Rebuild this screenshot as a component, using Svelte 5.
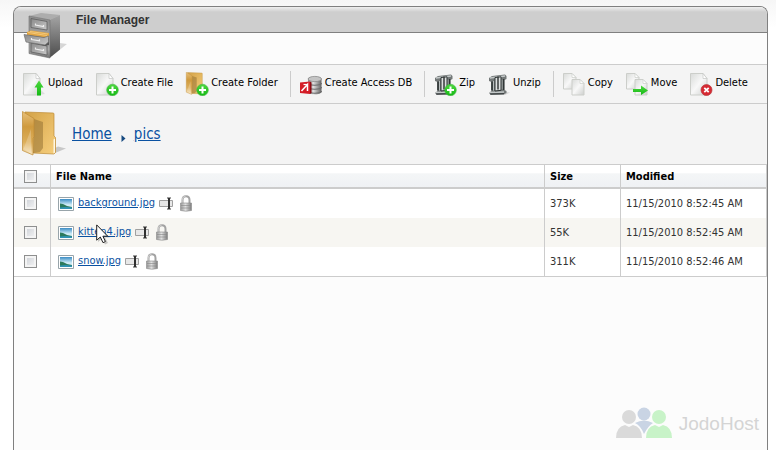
<script lang="ts">
	type Tool = { icon: string; label: string };

	const toolGroups: Tool[][] = [
		[
			{ icon: 'upload', label: 'Upload' },
			{ icon: 'create-file', label: 'Create File' },
			{ icon: 'create-folder', label: 'Create Folder' },
		],
		[{ icon: 'access', label: 'Create Access DB' }],
		[
			{ icon: 'zip', label: 'Zip' },
			{ icon: 'unzip', label: 'Unzip' },
		],
		[
			{ icon: 'copy', label: 'Copy' },
			{ icon: 'move', label: 'Move' },
			{ icon: 'delete', label: 'Delete' },
		],
	];

	let files = $state([
		{ name: 'background.jpg', size: '373K', modified: '11/15/2010 8:52:45 AM', checked: false },
		{ name: 'kitten4.jpg', size: '55K', modified: '11/15/2010 8:52:45 AM', checked: false },
		{ name: 'snow.jpg', size: '311K', modified: '11/15/2010 8:52:46 AM', checked: false },
	]);

	let allChecked = $derived(files.every((f) => f.checked));

	function toggleAll() {
		const next = !allChecked;
		for (const file of files) file.checked = next;
	}
</script>

<!-- shared gradients for the icons -->
<svg class="defs" width="0" height="0" aria-hidden="true">
	<defs>
		<linearGradient id="paper" x1="0" y1="0" x2="1" y2="1">
			<stop offset="0" stop-color="#d9dbd9" /><stop offset="0.5" stop-color="#f8f8f8" /><stop offset="1" stop-color="#cdcfcd" />
		</linearGradient>
		<linearGradient id="gold" x1="0" y1="0" x2="1" y2="1">
			<stop offset="0" stop-color="#d3a247" /><stop offset="1" stop-color="#f6ce7c" />
		</linearGradient>
		<linearGradient id="goldFront" x1="0" y1="0" x2="0" y2="1">
			<stop offset="0" stop-color="#e8c07a" /><stop offset="0.35" stop-color="#cf9a3e" /><stop offset="0.7" stop-color="#dcae5a" /><stop offset="1" stop-color="#f7e2b8" />
		</linearGradient>
		<linearGradient id="green" x1="0" y1="0" x2="0" y2="1">
			<stop offset="0" stop-color="#4ed83f" /><stop offset="1" stop-color="#14b914" />
		</linearGradient>
		<linearGradient id="steel" x1="0" y1="0" x2="1" y2="0">
			<stop offset="0" stop-color="#8a8a8a" /><stop offset="0.4" stop-color="#dedede" /><stop offset="1" stop-color="#636363" />
		</linearGradient>
		<linearGradient id="lock" x1="0" y1="0" x2="1" y2="0">
			<stop offset="0" stop-color="#9a9a9a" /><stop offset="0.45" stop-color="#e0e0e0" /><stop offset="1" stop-color="#7d7d7d" />
		</linearGradient>
		<linearGradient id="side" x1="0" y1="0" x2="0" y2="1">
			<stop offset="0" stop-color="#a5a5a5" /><stop offset="1" stop-color="#4c4c4c" />
		</linearGradient>
		<linearGradient id="face" x1="0" y1="0" x2="0" y2="1">
			<stop offset="0" stop-color="#8e8e8e" /><stop offset="0.8" stop-color="#a8a8a8" /><stop offset="1" stop-color="#707070" />
		</linearGradient>
		<linearGradient id="drawer" x1="0" y1="0" x2="1" y2="1">
			<stop offset="0" stop-color="#8a8a8a" /><stop offset="1" stop-color="#c9c9c9" />
		</linearGradient>
		<linearGradient id="sky" x1="0" y1="0" x2="0" y2="1">
			<stop offset="0" stop-color="#3b8cc4" /><stop offset="0.55" stop-color="#c8e8f5" /><stop offset="1" stop-color="#f4fafa" />
		</linearGradient>
	</defs>
</svg>

{#snippet plusBadge()}
	<circle cx="17.500" cy="18" r="5.800" fill="url(#green)" stroke="#3cb53c" stroke-width="0.6" />
	<path d="M17.500 14.500v7M14 18h7" stroke="#fff" stroke-width="2" />
{/snippet}

{#snippet sheet()}
	<path d="M16 23l7-1-4-4z" fill="#ddd" />
	<path d="M1.500 1.500h12.500l4 5v16.500H1.500z" fill="url(#paper)" stroke="#ccceca" />
	<path d="M14 1.500v5h4z" fill="#fff" stroke="#c4c6c4" stroke-width="0.7" />
{/snippet}

{#snippet folder()}
	<path d="M33 42l11-4.500-8-2-4 2z" fill="#000" opacity="0.18" />
	<path d="M3 1L31 2q1 0 1 1v22l1.500 1.500v15L32 43 11 42z" fill="url(#gold)" stroke="#bd8b35" stroke-width="0.700" />
	<path d="M12 8l9 3v26l-3 4-7 1z" fill="#8d6c2f" opacity="0.5" />
	<path d="M31.500 28.500l1.500-1v14l-1.500 1z" fill="#fff8e4" />
	<path d="M0.500 0.500l11.500 7v18l-1 2v16.500L0.500 39.500z" fill="url(#goldFront)" stroke="#bd8b35" stroke-width="0.700" />
	<path d="M1.500 38l7.500-20v24.500z" fill="#fff" opacity="0.22" />
{/snippet}

{#snippet clamp()}
	<path d="M16 20l7 .5-5 2.500H6z" fill="#000" opacity="0.12" />
	<path d="M2 6l3-2 13-1.500 1.500 1.500v3l-2 1v10l2 1v2l-3 1.500-12.500.5-2-2 2.500-2V10L2 9z" fill="#737878" />
	<path d="M3 6l15-2M3 20.500l14-.5" stroke="#c3c8c8" stroke-width="1.300" />
	<path d="M5 9.500v9M16.500 7v11" stroke="#303636" stroke-width="1.700" />
	<path d="M6.500 9v9.500M15 7.500v10" stroke="#b8bebe" />
	<path d="M8 5.500l6-.7v13.500l-6 .7z" fill="#dde0e0" stroke="#2e3434" />
	<path d="M11 4.500v13" stroke="#353a3a" stroke-width="1.500" />
	<path d="M3 22l14-.3" stroke="#34393a" />
{/snippet}

{#snippet toolIcon(kind: string)}
	<svg width="24" height="24" viewBox="0 0 24 24" aria-hidden="true">
		{#if kind === 'upload'}
			{@render sheet()}
			<path d="M17 8.500l4.500 7H19v8h-4v-8h-2.500z" fill="url(#green)" />
		{:else if kind === 'create-file'}
			{@render sheet()}
			{@render plusBadge()}
		{:else if kind === 'create-folder'}
			<g transform="translate(1 0) scale(0.51)">{@render folder()}</g>
			{@render plusBadge()}
		{:else if kind === 'access'}
			<path d="M9 7c0-3.500 13.500-3.500 13.500 0v12.500c0 4-13.500 4-13.500 0z" fill="url(#steel)" />
			<ellipse cx="15.800" cy="7" rx="6.700" ry="2.600" fill="#c4c4c4" stroke="#858585" stroke-width="0.7" />
			<path d="M9 11c0 3 13.500 3 13.500 0M9 15c0 3 13.500 3 13.500 0M9 19c0 3 13.500 3 13.500 0" fill="none" stroke="#6b6b6b" stroke-width="1.100" />
			<path d="M1 10.500l10-1v12.500l-10-1z" fill="#d41d27" />
			<path d="M2.500 19l6-6.500v6.500" fill="none" stroke="#fff" stroke-width="1.500" />
			<path d="M4.500 12.500h4" fill="none" stroke="#fff" stroke-width="1.200" />
			<path d="M11 9.500l1.500 1v10.500l-1.500 1z" fill="#8c0b13" />
		{:else if kind === 'zip'}
			{@render clamp()}
			{@render plusBadge()}
		{:else if kind === 'unzip'}
			{@render clamp()}
		{:else if kind === 'copy' || kind === 'move'}
			<path d="M1.500 1.500h8.500l4 4v11.500H1.500z" fill="url(#paper)" stroke="#ccceca" />
			<path d="M10 1.500v4h4z" fill="#fff" stroke="#ccceca" stroke-width="0.700" />
			<path d="M10 7.500h8l4 4v11.500H10z" fill="url(#paper)" stroke="#ccceca" />
			<path d="M18 7.500v4h4z" fill="#fff" stroke="#ccceca" stroke-width="0.700" />
			{#if kind === 'move'}
				<path d="M8 17h8v-3.500l7 5-7 4.500v-3H8z" fill="url(#green)" />
			{/if}
		{:else if kind === 'delete'}
			{@render sheet()}
			<circle cx="17.500" cy="18" r="5.500" fill="#d62a33" stroke="#b9363b" stroke-width="0.7" />
			<path d="M15.300 15.800l4.400 4.400M19.700 15.800l-4.400 4.400" stroke="#fff" stroke-width="1.800" />
		{/if}
	</svg>
{/snippet}

<main class="page">
	<section class="panel">
		<header class="title-bar">
			<svg class="cabinet" width="48" height="48" viewBox="0 0 48 48" aria-hidden="true">
				<path d="M30 44l15-12-7-1-9 6z" fill="#000" opacity="0.15" />
				<path d="M7 4l12-3 19 2-10 5z" fill="#adadad" />
				<path d="M27.500 8L38 3v34.500L27.500 46z" fill="url(#side)" />
				<path d="M7 4l21 4v38L7 41.500z" fill="url(#face)" stroke="#6f6f6f" stroke-width="0.600" />
				<path d="M9 6.500l16 3v8.500L9 15.500z" fill="url(#drawer)" stroke="#5e5e5e" stroke-width="0.800" />
				<path d="M9 31l16 3v9L9 40z" fill="url(#drawer)" stroke="#5e5e5e" stroke-width="0.800" />
				<path d="M8 19l19 3v11l-4 1-15-4z" fill="#555" />
				<path d="M5 20l4-1.500 18 2.500v5L5 23z" fill="#e2a542" />
				<path d="M6 20.500l19 3M8 19.500l18 2.500" stroke="#f8d690" stroke-width="0.700" />
				<path d="M2 22.500l20 3 4.500-1.500v6L23 33l-19-3z" fill="url(#drawer)" stroke="#707070" stroke-width="0.700" />
				<path d="M13.500 11.500v1.500l8 1.500V13M9.500 26v1.500l8 1.300v-1.500M13.500 35.500v1.500l8 1.500V37" fill="none" stroke="#eee" stroke-width="1.200" />
			</svg>
			<h1>File Manager</h1>
		</header>
		<div class="spacer"></div>

		<div class="toolbar" role="toolbar" aria-label="File actions">
			{#each toolGroups as group}
				<div class="tool-group">
					{#each group as tool}
						<button type="button" class="tool">
							{@render toolIcon(tool.icon)}
							<span>{tool.label}</span>
						</button>
					{/each}
				</div>
			{/each}
		</div>

		<nav class="breadcrumb" aria-label="Current folder">
			<svg width="46" height="46" viewBox="0 0 46 46" aria-hidden="true">
				{@render folder()}
			</svg>
			<a href="#home">Home</a>
			<svg class="arrow" width="5" height="7" viewBox="0 0 5 7" aria-hidden="true">
				<path d="M0.500 0L4.500 3.500 0.500 7z" fill="#174a80" />
			</svg>
			<a href="#pics">pics</a>
		</nav>

		<table class="files">
			<thead>
				<tr>
					<th class="col-check">
						<input type="checkbox" aria-label="Select all files" checked={allChecked} onchange={toggleAll} />
					</th>
					<th>File Name</th>
					<th class="col-size">Size</th>
					<th class="col-modified">Modified</th>
				</tr>
			</thead>
			<tbody>
				{#each files as file, i}
					<tr>
						<td class="col-check">
							<input type="checkbox" aria-label="Select {file.name}" bind:checked={file.checked} />
						</td>
						<td>
							<div class="file">
								<svg width="16" height="14" viewBox="0 0 16 14" aria-hidden="true">
									<path d="M0.500 0.500h15v13h-15z" fill="#fff" stroke="#98a4aa" />
									<path d="M2 2h12v10H2z" fill="url(#sky)" />
									<path d="M2 6.500l3 .5 4 2 5 1v1H2z" fill="#2c7a5c" />
									<path d="M2 10.500l6-.5 6 .5V12H2z" fill="#2f93b4" />
								</svg>
								<a href="#{file.name}">{file.name}</a>
								<button type="button" class="action rename" aria-label="Rename {file.name}">
									<svg width="15" height="13" viewBox="0 0 15 13" aria-hidden="true">
										<path d="M0.500 3.500h13v6h-13z" fill="#e8e8e8" stroke="#a0a0a0" />
										<path d="M8 1h4M8 12h4" stroke="#404040" stroke-width="1.200" />
										<path d="M10 1v11" stroke="#303030" stroke-width="2" />
									</svg>
								</button>
								<button type="button" class="action" aria-label="Permissions of {file.name}">
									<svg width="12" height="17" viewBox="0 0 12 17" aria-hidden="true">
										<path d="M2.500 9V5q0-3.700 3.500-3.700T9.500 5v4" fill="none" stroke="#a2a2a2" stroke-width="2" />
										<path d="M2.200 8V5q0-3.500 3.300-3.700" fill="none" stroke="#dcdcdc" stroke-width="0.8" />
										<path d="M0.500 8h11v7.500q-5.500 1.500-11 0z" fill="url(#lock)" stroke="#8a8a8a" stroke-width="0.600" />
										<path d="M1 10.500h10M1 13h10" stroke="#858585" stroke-width="0.600" />
									</svg>
								</button>
								{#if i === 1}
									<svg class="pointer" width="14" height="21" viewBox="0 0 14 21" aria-hidden="true">
										<path d="M2 2v16l4-3.300 3 5.800 3-1.500-3-5.500h5z" fill="#000" opacity="0.2" />
										<path d="M0.700 0.900v15.300l3.600-3.200 2.700 5.700 2.400-1.200-2.500-5.300h4.800z" fill="#fff" stroke="#222" />
									</svg>
								{/if}
							</div>
						</td>
						<td>{file.size}</td>
						<td>{file.modified}</td>
					</tr>
				{/each}
			</tbody>
		</table>

		<footer class="brand">
			<svg width="58" height="34" viewBox="0 0 58 34" aria-hidden="true">
				<circle cx="29" cy="8" r="6.500" fill="#c9d4e4" />
				<path d="M20 17q9-5 18 0-5 3-9 11-3-8-9-11z" fill="#c9d4e4" />
				<circle cx="14" cy="11" r="7" fill="#dadada" />
				<path d="M1 32q0-11 9-13l4 2 4-2q9 2 9 13z" fill="#dadada" />
				<circle cx="44" cy="11" r="7" fill="#c8f3c8" />
				<path d="M31 32q0-11 9-13l4 2 4-2q9 2 9 13z" fill="#c8f3c8" />
			</svg>
			<span>JodoHost</span>
		</footer>
	</section>
</main>

<style>
	:global(body) {
		margin: 0;
		background: #fff;
	}

	.defs {
		position: absolute;
	}

	svg {
		display: block;
		flex-shrink: 0;
	}

	.page {
		box-sizing: border-box;
		display: flex;
		min-height: 100vh;
		padding: 6px 8px 0 13px;
		background: linear-gradient(#f6f6f6, #fff 28px);
		color: #333;
		font-family: 'DejaVu Sans Condensed', Tahoma, sans-serif;
		font-size: 11px;
	}

	.panel {
		flex: 1;
		display: flex;
		flex-direction: column;
		border: 1px solid #808080;
		border-bottom: 0;
		border-radius: 8px 8px 0 0;
		background: #fcfcfc;
	}

	.title-bar {
		position: relative;
		height: 25px;
		padding-left: 62px;
		border-bottom: 1px solid #808080;
		border-radius: 7px 7px 0 0;
		background: linear-gradient(#efefef, #cecece 5px);
	}

	.title-bar h1 {
		margin: 0;
		font: bold 12px/26px 'Liberation Sans', Arial, sans-serif;
		color: #333;
	}

	.cabinet {
		position: absolute;
		top: 5px;
		left: 8px;
	}

	.spacer {
		height: 31px;
	}

	.toolbar {
		display: flex;
		align-items: center;
		height: 38px;
		padding-left: 8px;
		border-top: 1px solid #ccc;
		border-bottom: 1px solid #ccc;
		background: #f4f4f4;
	}

	.tool-group {
		display: flex;
		align-items: center;
		gap: 12px;
		height: 26px;
	}

	.tool-group + .tool-group {
		margin-left: 12px;
		padding-left: 8px;
		border-left: 1px solid #ccc;
	}

	.tool {
		display: flex;
		align-items: center;
		gap: 2px;
		padding: 0;
		border: 0;
		background: none;
		color: #000;
		font: inherit;
		line-height: 14px;
		white-space: nowrap;
		cursor: pointer;
	}

	.tool span {
		padding-bottom: 2px;
	}

	.breadcrumb {
		display: flex;
		align-items: center;
		height: 60px;
		padding-left: 8px;
		background: #f4f4f4;
		font-size: 15px;
	}

	.breadcrumb a {
		margin-left: 4px;
	}

	.arrow {
		margin: 8px 4px 0 9px;
	}

	a {
		color: #0a51a1;
		text-decoration: underline;
	}

	.files {
		width: 100%;
		border-collapse: separate;
		border-spacing: 0;
		table-layout: fixed;
		border: solid #ccc;
		border-width: 1px 1px 1px 0;
		background: #fff;
	}

	th,
	td {
		box-sizing: border-box;
		padding: 0 5px;
		border-left: 1px solid #ccc;
		text-align: left;
		white-space: nowrap;
	}

	th {
		height: 24px;
		border-bottom: 2px solid #ccc;
		background: linear-gradient(#fff 35%, #f4f6f7 40%, #eff1f4);
		color: #000;
	}

	td {
		height: 29px;
	}

	tbody tr:nth-child(even) {
		background: #f7f6f2;
	}

	.col-check {
		width: 36px;
		padding-left: 10px;
		border-left: 0;
	}

	.col-size {
		width: 76px;
	}

	.col-modified {
		width: 146px;
	}

	input[type='checkbox'] {
		display: block;
		appearance: none;
		width: 13px;
		height: 13px;
		margin: 0;
		border: 1px solid #8e8f8f;
		background: linear-gradient(135deg, #cbcfd5, #f6f6f6);
		box-shadow: inset 0 0 0 2px #f4f4f4;
	}

	input[type='checkbox']:checked {
		background: #2c628b;
	}

	.file {
		position: relative;
		display: flex;
		align-items: center;
		gap: 4px;
		padding-left: 2px;
	}

	.file a {
		padding-bottom: 2px;
	}

	.action {
		padding: 0;
		border: 0;
		background: none;
		cursor: pointer;
	}

	.rename {
		margin-right: 2px;
	}

	.pointer {
		position: absolute;
		top: 0;
		left: 40px;
		pointer-events: none;
	}

	.brand {
		display: flex;
		align-items: center;
		align-self: flex-end;
		gap: 6px;
		margin: auto 8px 10px 0;
		color: #d4d4d4;
		font: 19px 'Liberation Sans', Arial, sans-serif;
	}

	.brand span {
		padding-top: 2px;
	}
</style>
